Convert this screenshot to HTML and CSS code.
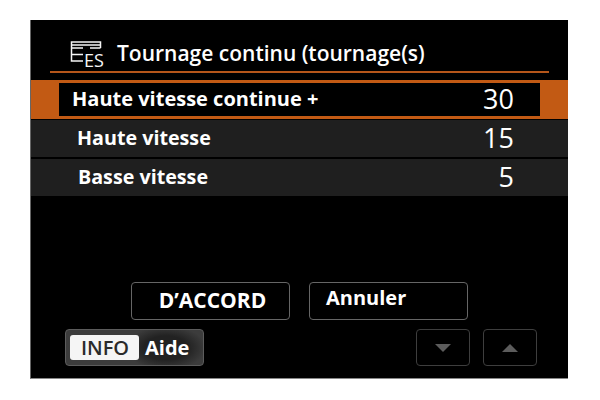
FILE: index.html
```html
<!DOCTYPE html>
<html lang="fr">
<head>
<meta charset="utf-8">
<title>Tournage continu</title>
<link rel="stylesheet" href="styles.css">
</head>
<body>
<main class="screen">
  <header class="title">
    <svg class="title-icon" width="34" height="32" viewBox="0 0 34 32" fill="none" stroke="#f5f5f5" stroke-width="1.5">
      <path d="M1.500 8V2H30.500V8M1.500 5H30.500M1.500 8V21H13M1.500 8H13M1.500 14.500H13M30.500 8H20"/>
      <text x="14" y="27" class="icon-text">ES</text>
    </svg>
    <h1>Tournage continu (tournage(s)</h1>
  </header>
  <ul class="list">
    <li class="row selected"><div class="row-inner"><span>Haute vitesse continue +</span><span class="value">30</span></div></li>
    <li class="row second"><div class="row-inner"><span>Haute vitesse</span><span class="value">15</span></div></li>
    <li class="row third"><div class="row-inner"><span>Basse vitesse</span><span class="value">5</span></div></li>
  </ul>
  <div class="actions">
    <button class="btn ok">D’ACCORD</button>
    <button class="btn cancel">Annuler</button>
  </div>
  <footer class="footer">
    <div class="help"><span class="info">INFO</span><span class="aide">Aide</span></div>
    <div class="arrows">
      <button class="arrow"><svg width="18" height="10" viewBox="0 0 18 10"><path d="M1 1H17L9 9Z" fill="#5c5c5c"/></svg></button>
      <button class="arrow"><svg width="18" height="10" viewBox="0 0 18 10"><path d="M1 9H17L9 1Z" fill="#5c5c5c"/></svg></button>
    </div>
  </footer>
</main>
</body>
</html>
```
FILE: styles.css
```css
* { box-sizing: border-box; }
html, body { margin: 0; padding: 0; background: #fff; }
body { width: 600px; height: 400px; overflow: hidden; padding: 20px 0 0 30px; font-family: "Open Sans", "Noto Sans", sans-serif; color: #fff; }
.screen { width: 538px; height: 359px; background: #000; display: flex; flex-direction: column; border-left: 1px solid #666; border-bottom: 1px solid #888; }
.title { margin: 0 19px 0 19px; height: 53px; padding: 18px 0 0 20px; display: flex; align-items: flex-start; gap: 13px; border-bottom: 2px solid #b5561a; }
.title-icon { flex: none; margin-top: 2px; width: 34px; height: 32px; }
.icon-text { font-family: "Open Sans", sans-serif; font-size: 18px; font-weight: 500; fill: #f5f5f5; stroke: none; }
.title h1 { margin: 0; font-size: 21px; font-weight: 600; line-height: 30px; white-space: nowrap; }
.list { list-style: none; margin: 7px 0 0; padding: 0; display: flex; flex-direction: column; }
.row { background: #1f1f1f; height: 37px; }
.row-inner { display: flex; justify-content: space-between; align-items: center; height: 100%; font-size: 19.7px; font-weight: 700; }
.row-inner span:first-child { margin-bottom: 3px; }
.value { font-weight: 400; font-size: 27px; margin-bottom: 3px; }
.selected { background: #c25a14; height: 39px; padding: 3px 28px 3px 28px; margin-bottom: 1px; }
.selected .row-inner { background: #000; padding: 0 26px 0 13px; font-size: 20px; }
.selected .value { font-size: 27px; }
.second { margin-bottom: 2px; }
.second .row-inner { padding: 0 54px 0 46px; }
.third .row-inner { padding: 0 54px 0 47px; }
.actions { display: flex; gap: 19px; margin: 86px 0 0 100px; }
.btn { width: 159px; height: 38px; background: #000; color: #fff; border: 1px solid #666; border-radius: 4px; font: 700 21px/1 "Open Sans", sans-serif; padding: 0; }
.ok { padding: 0 0 2px 4px; }
.cancel { text-align: left; padding: 0 0 6px 16px; font-size: 20px; }
.footer { display: flex; justify-content: space-between; margin: 9px 31px 0 34px; }
.help { width: 139px; height: 37px; background: radial-gradient(ellipse 40px 22px at 100px 18px, #222 55%, #3c3c3c 100%); border: 1px solid #5c5c5c; border-radius: 4px; display: flex; align-items: center; padding-left: 4px; gap: 6px; }
.info { background: #f5f5f5; color: #2a2a2a; width: 69px; height: 25px; padding-left: 1px; border-radius: 3px; display: flex; align-items: center; justify-content: center; font-size: 20px; font-weight: 600; }
.aide { font-size: 20px; font-weight: 700; }
.arrows { display: flex; gap: 13px; }
.arrow { width: 54px; height: 37px; background: #000; border: 1px solid #3e3e3e; border-radius: 4px; display: flex; align-items: center; justify-content: center; padding: 0; }
```
